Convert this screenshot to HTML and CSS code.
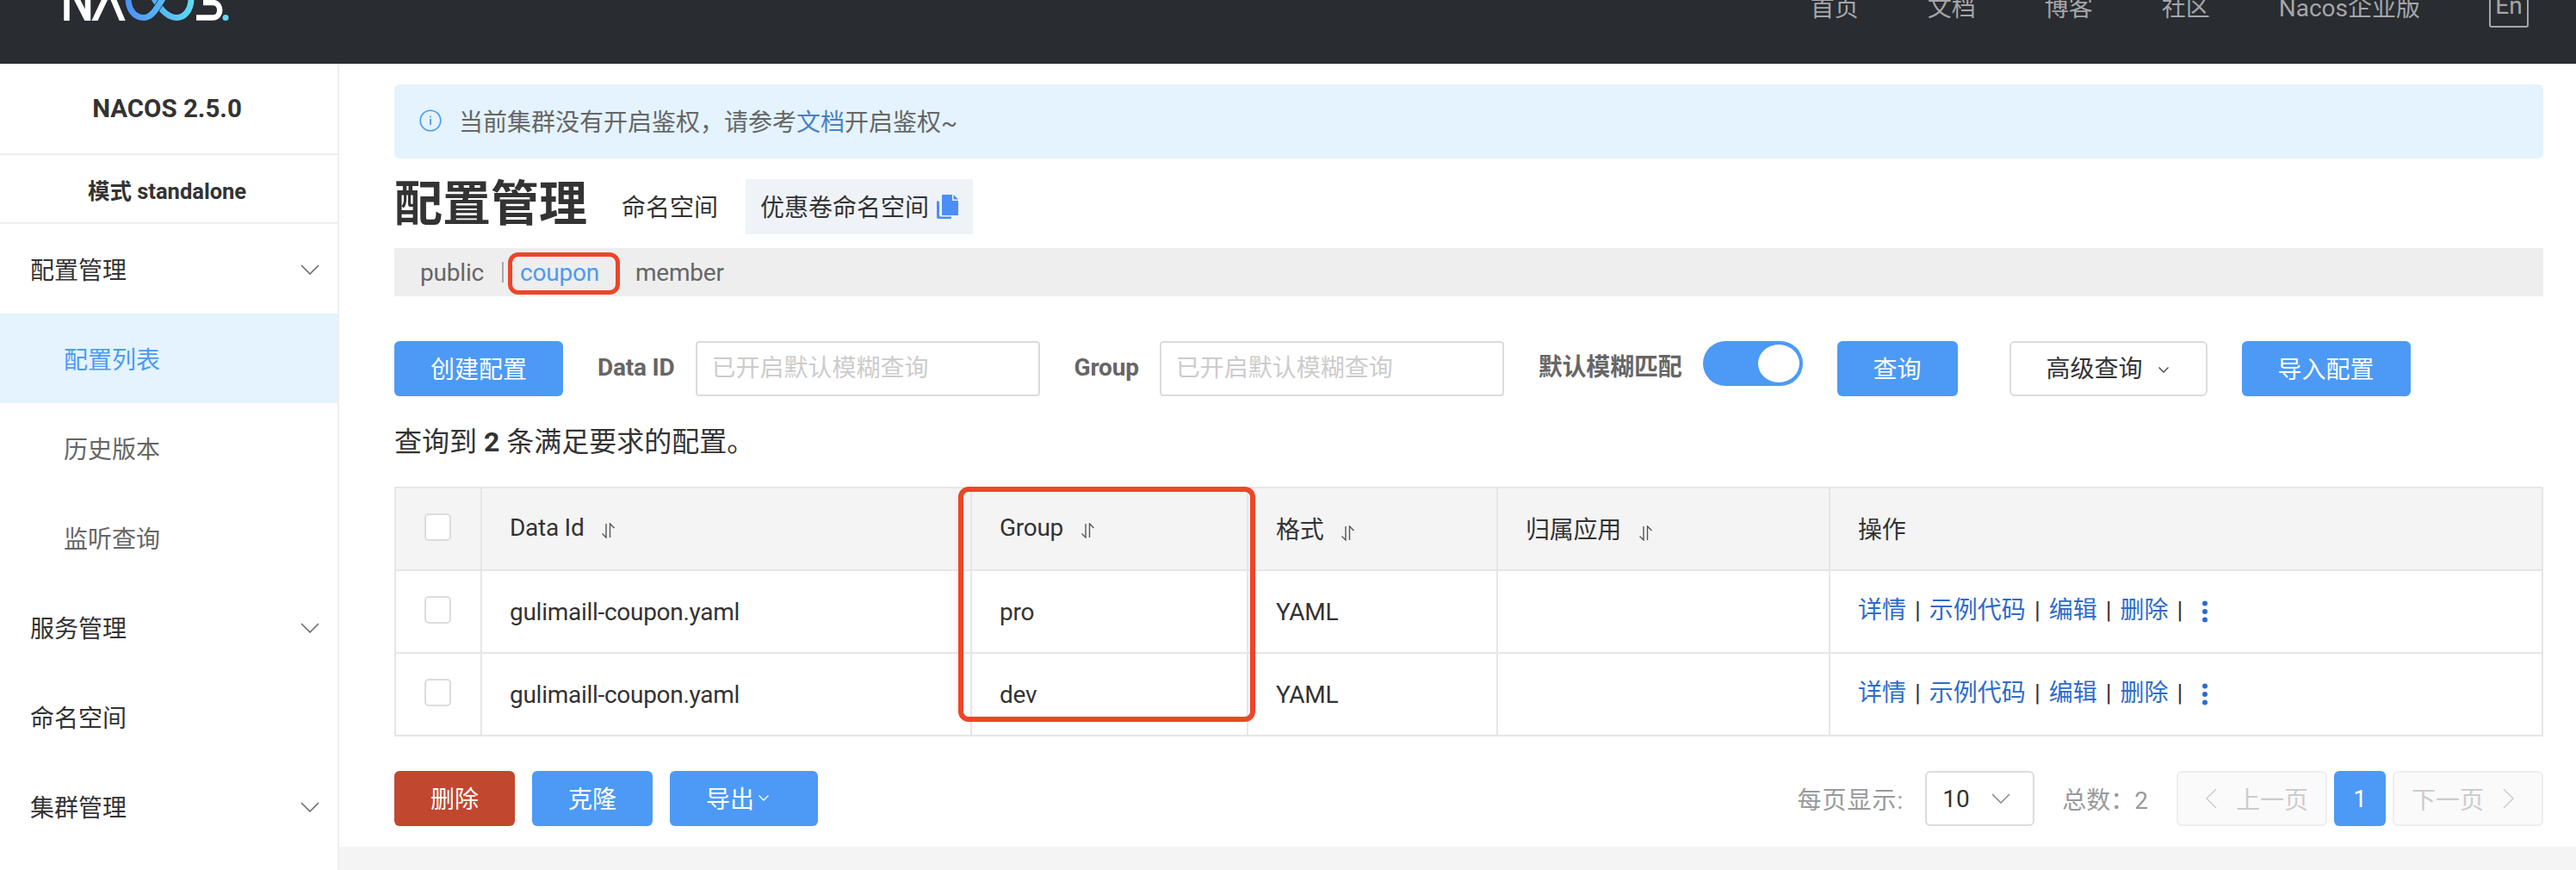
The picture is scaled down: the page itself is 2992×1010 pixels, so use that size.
FILE: index.html
```html
<!DOCTYPE html>
<html lang="zh-CN">
<head>
<meta charset="utf-8">
<title>Nacos 配置管理</title>
<link rel="stylesheet" href="styles.css">
</head>
<body>
<header class="topbar">
  <div class="topbar-inner">
    <svg class="logo" viewBox="74 -32 200 56" width="200" height="56" role="img" aria-label="NACOS.">
      <defs>
        <linearGradient id="logoGrad" gradientUnits="userSpaceOnUse" x1="145" y1="0" x2="226" y2="0">
          <stop offset="0" stop-color="#4d8ff9"/>
          <stop offset="1" stop-color="#5edcf4"/>
        </linearGradient>
      </defs>
      <g fill="none" stroke="#fff" stroke-width="6.500">
        <path d="M77.500 24V-24L102 24V-24"/>
        <path d="M109 26L127 -12L143 26"/>
        <path d="M228 20.500H247C258 20.500 258 3 247 3H236"/>
      </g>
      <g fill="none" stroke="url(#logoGrad)" stroke-width="7">
        <path d="M174 -10L180 0C186 10 195 20.500 205 20.500C215 20.500 222 11 222 -2"/>
        <path d="M149 -2C149 11 156 20.500 167 20.500C176 20.500 182 10 188 0L194 -10" stroke="#292c31" stroke-width="8.500"/>
        <path d="M149 -2C149 11 156 20.500 167 20.500C176 20.500 182 10 188 0L194 -10"/>
      </g>
      <circle cx="262" cy="20.500" r="3.500" fill="#5edcf4"/>
    </svg>
    <nav class="topnav">
      <a>首页</a><a>文档</a><a>博客</a><a>社区</a><a>Nacos企业版</a>
      <span class="lang">En</span>
    </nav>
  </div>
</header>
<div class="layout">
  <aside class="sidebar">
    <div class="brand">NACOS 2.5.0</div>
    <div class="mode">模式 standalone</div>
    <div class="menu-group">配置管理
      <svg class="chev" viewBox="0 0 22 12" width="22" height="12"><path d="M1 1L11 11L21 1"/></svg>
    </div>
    <div class="menu-item active">配置列表</div>
    <div class="menu-item">历史版本</div>
    <div class="menu-item">监听查询</div>
    <div class="menu-group">服务管理
      <svg class="chev" viewBox="0 0 22 12" width="22" height="12"><path d="M1 1L11 11L21 1"/></svg>
    </div>
    <div class="menu-group">命名空间</div>
    <div class="menu-group">集群管理
      <svg class="chev" viewBox="0 0 22 12" width="22" height="12"><path d="M1 1L11 11L21 1"/></svg>
    </div>
  </aside>
  <main class="content">
    <div class="panel">
      <div class="alert">
        <svg class="alert-icon" viewBox="0 0 26 26" width="26" height="26">
          <circle cx="13" cy="13" r="11.800" fill="none" stroke="#4c9af5" stroke-width="1.600"/>
          <circle cx="13" cy="8.500" r="1.100" fill="#4c9af5"/>
          <rect x="12.100" y="11" width="1.800" height="7" fill="#4c9af5"/>
        </svg>
        <span>当前集群没有开启鉴权，请参考<a class="alert-link">文档</a>开启鉴权~</span>
      </div>
      <div class="title-row">
        <h1 class="page-title">配置管理</h1>
        <span class="ns-label">命名空间</span>
        <span class="ns-box">优惠卷命名空间
          <svg class="copy" viewBox="0 0 26 28" width="26" height="28">
            <path d="M1 7.500h3V24a1.500 1.500 0 0 0 1.500 1.500H18V27a1 1 0 0 1-1 1H3a2 2 0 0 1-2-2z" fill="#4a8ef7"/>
            <path d="M7 1a1 1 0 0 1 1-1h11v7h7v16a1 1 0 0 1-1 1H8a1 1 0 0 1-1-1z" fill="#4a8ef7"/>
            <path d="M20.500 0L26 5.500h-5.500z" fill="#4a8ef7"/>
          </svg>
        </span>
      </div>
      <div class="ns-tabs">
        <span>public</span>
        <span class="tab-sep"></span>
        <span class="tab-current">coupon<span class="mark mark-tab"></span></span>
        <span class="tab-last">member</span>
      </div>
      <div class="toolbar">
        <button class="btn btn-primary btn-create">创建配置</button>
        <label class="field-label">Data ID</label>
        <div class="input">已开启默认模糊查询</div>
        <label class="field-label">Group</label>
        <div class="input">已开启默认模糊查询</div>
        <label class="field-label">默认模糊匹配</label>
        <span class="switch"><span class="knob"></span></span>
        <button class="btn btn-primary btn-query">查询</button>
        <button class="btn btn-ghost">高级查询
          <svg class="chev-small" viewBox="0 0 12 7" width="12" height="7"><path d="M0.500 0.500L6 6L11.500 0.500"/></svg>
        </button>
        <button class="btn btn-primary btn-create">导入配置</button>
      </div>
      <p class="count">查询到 <b>2</b> 条满足要求的配置。</p>
      <div class="table-wrap">
        <table class="grid">
          <colgroup>
            <col class="c-check"><col class="c-id"><col class="c-group"><col class="c-format"><col class="c-app"><col class="c-ops">
          </colgroup>
          <thead>
            <tr>
              <th><span class="checkbox"></span></th>
              <th>Data Id<svg class="sort" viewBox="0 0 15 18" width="15" height="18"><path d="M5 1V17L0.500 12.500M9.500 17V1L14.500 6"/></svg></th>
              <th>Group<svg class="sort" viewBox="0 0 15 18" width="15" height="18"><path d="M5 1V17L0.500 12.500M9.500 17V1L14.500 6"/></svg></th>
              <th>格式<svg class="sort" viewBox="0 0 15 18" width="15" height="18"><path d="M5 1V17L0.500 12.500M9.500 17V1L14.500 6"/></svg></th>
              <th>归属应用<svg class="sort" viewBox="0 0 15 18" width="15" height="18"><path d="M5 1V17L0.500 12.500M9.500 17V1L14.500 6"/></svg></th>
              <th>操作</th>
            </tr>
          </thead>
          <tbody>
            <tr>
              <td><span class="checkbox"></span></td>
              <td>gulimaill-coupon.yaml</td>
              <td>pro</td>
              <td>YAML</td>
              <td></td>
              <td class="ops"><a>详情</a><i>|</i><a>示例代码</a><i>|</i><a>编辑</a><i>|</i><a>删除</a><i>|</i><svg class="dots" viewBox="0 0 8 26" width="8" height="26"><circle cx="4" cy="3.500" r="3"/><circle cx="4" cy="13" r="3"/><circle cx="4" cy="22.500" r="3"/></svg></td>
            </tr>
            <tr>
              <td><span class="checkbox"></span></td>
              <td>gulimaill-coupon.yaml</td>
              <td>dev</td>
              <td>YAML</td>
              <td></td>
              <td class="ops"><a>详情</a><i>|</i><a>示例代码</a><i>|</i><a>编辑</a><i>|</i><a>删除</a><i>|</i><svg class="dots" viewBox="0 0 8 26" width="8" height="26"><circle cx="4" cy="3.500" r="3"/><circle cx="4" cy="13" r="3"/><circle cx="4" cy="22.500" r="3"/></svg></td>
            </tr>
          </tbody>
        </table>
        <span class="mark mark-group"></span>
      </div>
      <div class="footer-row">
        <button class="btn btn-danger btn-small">删除</button>
        <button class="btn btn-primary btn-small">克隆</button>
        <button class="btn btn-primary btn-export">导出<svg class="chev-tiny" viewBox="0 0 12 7" width="12" height="7"><path d="M0.500 0.500L6 6L11.500 0.500"/></svg></button>
        <div class="pager">
          <span class="pager-label">每页显示:</span>
          <span class="select">10<svg class="chev-select" viewBox="0 0 22 12" width="22" height="12"><path d="M1 1L11 11L21 1"/></svg></span>
          <span class="pager-total">总数：2</span>
          <span class="page-btn page-prev">
            <svg class="chev-side" viewBox="0 0 13 24" width="13" height="24"><path d="M12 1L1 12L12 23"/></svg>上一页
          </span>
          <span class="page-num">1</span>
          <span class="page-btn page-next">下一页
            <svg class="chev-side" viewBox="0 0 13 24" width="13" height="24"><path d="M1 1L12 12L1 23"/></svg>
          </span>
        </div>
      </div>
    </div>
  </main>
</div>
</body>
</html>
```

FILE: styles.css
```css
* { box-sizing: border-box; }
html, body { margin: 0; padding: 0; }
body {
  width: 2992px;
  height: 1010px;
  overflow: hidden;
  background: #f4f4f4;
  color: #333;
  font-family: Roboto, "Noto Sans CJK SC", sans-serif;
  font-size: 28px;
}
a { text-decoration: none; }

/* top bar */
.topbar { height: 74px; background: #292c31; overflow: hidden; }
.topbar-inner {
  display: flex;
  align-items: center;
  height: 56px;
  margin-top: -24px;
  padding: 0 55px 0 74px;
}
.logo { display: block; align-self: flex-start; margin-top: -8px; }
.topnav { display: flex; align-items: center; gap: 80px; height: 56px; margin-left: auto; color: #a4a6a9; font-size: 28px; }
.topnav a { padding-top: 6px; }
.lang {
  display: flex;
  align-items: center;
  justify-content: center;
  width: 46px;
  height: 56px;
  padding-top: 4px;
  border: 2px solid #a4a6a9;
  border-radius: 3px;
}

/* layout */
.layout { display: flex; height: 936px; }
.sidebar { flex: none; width: 394px; background: #fff; border-right: 2px solid #eee; }
.brand, .mode {
  display: flex;
  align-items: center;
  justify-content: center;
  padding-right: 4px;
  border-bottom: 2px solid #eee;
  font-weight: 700;
}
.brand { height: 106px; font-size: 29.500px; }
.mode { height: 80px; font-size: 25.500px; }
.menu-group, .menu-item { display: flex; align-items: center; height: 104px; color: #333; }
.menu-group { justify-content: space-between; padding: 0 21px 0 35px; }
.menu-item { padding-left: 74px; color: #666; }
.menu-item.active { background: #e4f3fe; color: #4c9af5; }
.chev { fill: none; stroke: #666; stroke-width: 1.500; margin-top: 2px; }

/* content */
.content { flex: 1; min-width: 0; }
.panel { height: 909px; padding: 24px 38px 0 64px; background: #fff; }

.alert {
  display: flex;
  align-items: center;
  height: 86px;
  padding: 0 0 2px 29px;
  background: #e4f3fe;
  border-radius: 6px;
  color: #666;
}
.alert-icon { margin-right: 20px; }
.alert-link { color: #4a7fc4; }

.title-row { display: flex; align-items: center; height: 64px; margin-top: 24px; }
.page-title { margin: 0 42px 0 0; padding-bottom: 6px; width: 222px; font-size: 56px; font-weight: 700; line-height: 64px; white-space: nowrap; }
.ns-label { margin-right: 32px; padding-bottom: 2px; }
.ns-box {
  display: flex;
  align-items: center;
  height: 64px;
  padding: 0 17px 2px 17px;
  background: #eff3f8;
}
.copy { margin-left: 8px; margin-top: 2px; }

.ns-tabs {
  display: flex;
  align-items: center;
  height: 56px;
  margin-top: 16px;
  padding-left: 30px;
  background: #eee;
  color: #666;
  letter-spacing: -0.2px;
}
.tab-sep { width: 2px; height: 24px; margin: 0 19px 0 21px; background: #aaa; }
.tab-current { position: relative; color: #4c9af5; }
.tab-last { margin-left: 42px; }
.mark { position: absolute; border-style: solid; border-color: #ee4528; pointer-events: none; }
.mark-tab { left: -14px; top: -7px; width: 130px; height: 49px; border-width: 5px; border-radius: 12px; }

.toolbar { display: flex; align-items: flex-start; height: 64px; margin-top: 52px; }
.btn {
  height: 64px;
  padding: 0 0 2px;
  border: 0;
  border-radius: 6px;
  font: inherit;
  color: #fff;
}
.btn-primary { background: #4c9af5; }
.btn-danger { background: #c1472f; }
.btn-create { width: 196px; }
.btn-query { width: 140px; margin-left: 40px; }
.btn-ghost {
  display: flex;
  align-items: center;
  width: 230px;
  margin-left: 60px;
  padding: 0 0 4px 41px;
  background: #fff;
  border: 2px solid #dcdcdc;
  color: #333;
}
.chev-small { margin: 6px 0 0 18px; fill: none; stroke: #444; stroke-width: 1.300; }
.btn-ghost + .btn { margin-left: 40px; }
.field-label { height: 62px; line-height: 62px; margin: 0 24px 0 40px; color: #666; font-weight: 700; white-space: nowrap; letter-spacing: -0.2px; }
.input {
  width: 400px;
  height: 64px;
  padding-left: 17px;
  border: 2px solid #dcdcdc;
  border-radius: 4px;
  color: #ccc;
  line-height: 60px;
}
.switch { position: relative; display: block; width: 116px; height: 52px; background: #4c9af5; border-radius: 26px; }
.knob { position: absolute; right: 4px; top: 4px; width: 48px; height: 44px; background: #fff; border-radius: 50%; }

.count { height: 40px; margin: 33px 0 32px; font-size: 32px; line-height: 40px; color: #333; }

.table-wrap { position: relative; }
.grid { width: 2496px; border-collapse: collapse; table-layout: fixed; }
.c-check { width: 100px; }
.c-id { width: 569px; }
.c-group { width: 321px; }
.c-format { width: 290px; }
.c-app { width: 386px; }
.c-ops { width: 828px; }
.grid th, .grid td {
  height: 96px;
  padding: 0 32px;
  border: 2px solid #e6e6e6;
  font-weight: 400;
  font-size: 28px;
  text-align: left;
  color: #333;
  white-space: nowrap;
  letter-spacing: -0.28px;
}
.grid th { padding-bottom: 3px; background: #f4f4f4; }
.grid th:first-child, .grid td:first-child { padding: 0; }
.checkbox {
  display: block;
  width: 31px;
  height: 32px;
  margin: -4px 0 0 33px;
  background: #fff;
  border: 2px solid #dcdcdc;
  border-radius: 5px;
}
.sort { margin-left: 21px; fill: none; stroke: #555; stroke-width: 1.400; vertical-align: -3px; }
.grid .ops { padding-bottom: 1px; line-height: 26px; letter-spacing: 0; }
.ops a { color: #2e6cca; }
.ops i { margin: 0 10px; font-style: normal; color: #333; }
.dots { margin-left: 12px; fill: #2e6cca; vertical-align: -5px; }
.mark-group { left: 655px; top: 0; width: 345px; height: 273px; border-width: 6px; border-radius: 12px; }

.footer-row { display: flex; align-items: center; height: 64px; margin-top: 40px; }
.btn-small { width: 140px; margin-right: 20px; }
.btn-export { display: flex; align-items: center; width: 172px; padding-left: 42px; }
.chev-tiny { margin: 0 0 0 5px; fill: none; stroke: #fff; stroke-width: 1.300; }
.pager { display: flex; align-items: center; margin-left: auto; color: #999; }
.pager-label { margin-right: 25px; letter-spacing: 1px; }
.select {
  display: flex;
  align-items: center;
  justify-content: space-between;
  width: 127px;
  height: 64px;
  padding: 0 26px 0 18px;
  border: 2px solid #dcdcdc;
  border-radius: 6px;
  color: #333;
}
.chev-select { fill: none; stroke: #888; stroke-width: 1.500; }
.pager-total { margin: 0 33px 0 32px; }
.page-btn {
  display: flex;
  align-items: center;
  gap: 22px;
  width: 175px;
  height: 64px;
  background: #fafafa;
  border: 2px solid #eee;
  border-radius: 6px;
  color: #ccc;
}
.page-prev { padding-left: 32px; }
.page-next { padding-left: 20px; }
.chev-side { fill: none; stroke: #ccc; stroke-width: 1.500; }
.page-num {
  display: flex;
  align-items: center;
  justify-content: center;
  width: 60px;
  height: 64px;
  margin: 0 8px;
  background: #4c9af5;
  border-radius: 6px;
  color: #fff;
}
```
